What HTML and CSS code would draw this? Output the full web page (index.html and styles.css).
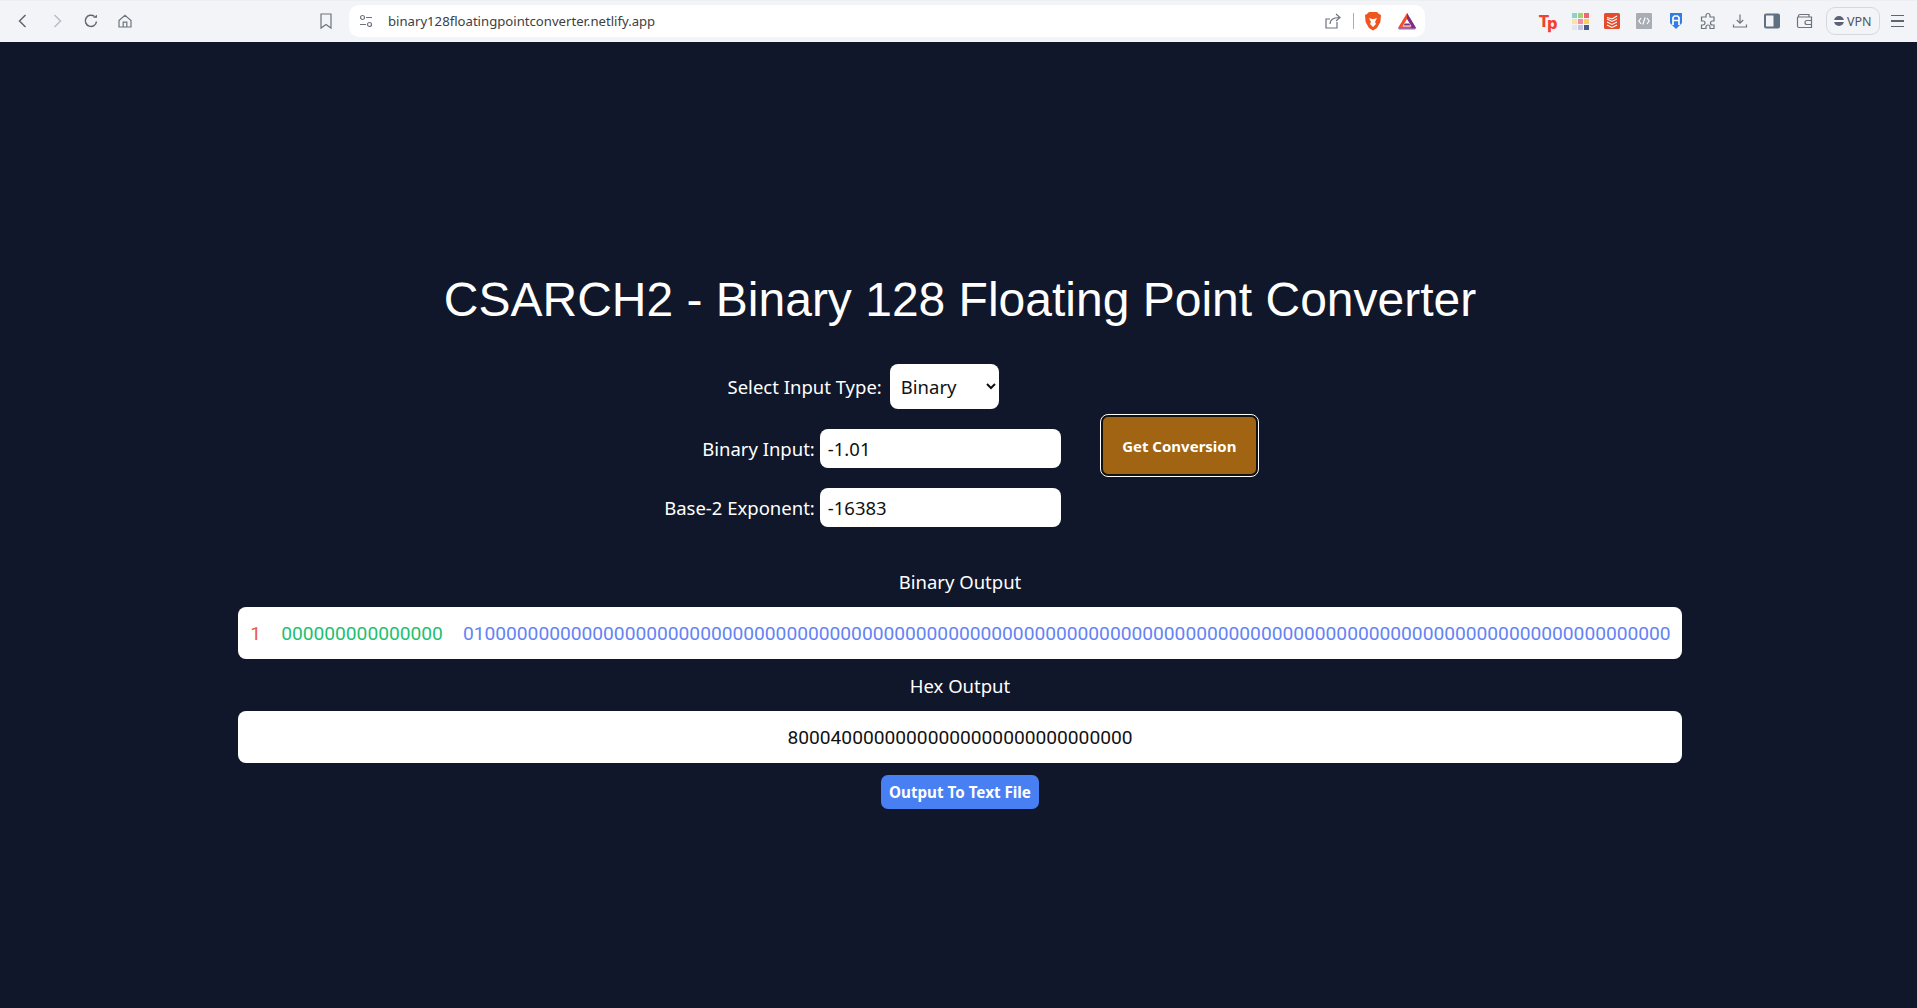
FILE: index.html
```html
<!DOCTYPE html>
<html lang="en">
<head>
    <meta charset="UTF-8">
    <meta name="viewport" content="width=device-width, initial-scale=1.0">
    <title>CSARCH2 - Binary 128 Floating Point Converter</title>
    <link rel="stylesheet" href="styles.css">
</head>
<body>
    <header class="toolbar">
        <div class="nav-buttons">
            <span class="tool"><svg width="16" height="16" viewBox="0 0 16 16"><path d="M10.5 2 4.5 8l6 6" class="ln"/></svg></span>
            <span class="tool"><svg width="16" height="16" viewBox="0 0 16 16"><path d="M5.5 2l6 6-6 6" class="ln faint"/></svg></span>
            <span class="tool"><svg width="16" height="16" viewBox="0 0 16 16"><path d="M13.5 8.5A5.6 5.6 0 1 1 11.5 3.500" class="ln"/><path d="M10 4.800h4V1.800z" class="fill"/></svg></span>
            <span class="tool"><svg width="16" height="16" viewBox="0 0 16 16"><path d="M2 7.500 8 2.200l6 5.300V14H2zM6.200 14V9.200h3.600V14" class="ln thin"/></svg></span>
        </div>
        <span class="tool bookmark"><svg width="16" height="18" viewBox="0 0 16 18"><path d="M3 2h10v14l-5-3.500L3 16z" class="ln thin"/></svg></span>
        <div class="urlbar">
            <svg class="site-icon" width="14" height="14" viewBox="0 0 14 14"><circle cx="3.500" cy="3.500" r="2" class="ln thin"/><path d="M7 3.500h6M1 10.500h6" class="ln thin"/><circle cx="10.500" cy="10.500" r="2" class="ln thin"/></svg>
            <span class="url">binary128floatingpointconverter.netlify.app</span>
            <svg class="share" width="18" height="18" viewBox="0 0 18 18"><path d="M13 10v6H2V7h4" class="ln thin"/><path d="M6 12c0-4 3-6.500 9-6.500M12 2l4 3.500-4 3.500" class="ln thin"/></svg>
            <span class="sep"></span>
            <svg class="brave" width="18" height="20" viewBox="0 0 18 20"><path d="M5 1h8l2 2 2 1-.6 7L13 17l-4 2.500L5 17 1.600 11 1 4l2-1z" fill="#f1551e"/><path d="M5 7l3 1h2l3-1-2 4 1 2-3 3-3-3 1-2z" fill="#fff"/></svg>
            <svg class="bat" width="20" height="18" viewBox="0 0 20 18"><path d="M10 1 1 16h18z" fill="#f2502a"/><path d="M1 16h18l-1 1.500H2z" fill="#a06aa8"/><path d="M10 1l9 15H14L10 8z" fill="#7d2f85"/><path d="M5.500 14.500h9L10 7z" fill="#fff"/><path d="M6.500 13.500h7l-1.300-2H7.800z" fill="#7d2f85"/></svg>
        </div>
        <div class="extensions">
            <span class="ext tp">T<span class="tp-p">p</span></span>
            <span class="ext swatches">
                <i class="sw1"></i><i class="sw2"></i><i class="sw3"></i>
                <i class="sw4"></i><i class="sw5"></i><i class="sw6"></i>
                <i class="sw7"></i><i class="sw8"></i><i class="sw9"></i>
            </span>
            <span class="ext"><svg width="16" height="16" viewBox="0 0 16 16"><rect width="16" height="16" rx="1.500" fill="#e44c2c"/><path d="M3 6 8 8.500 13 6M3 9 8 11.500 13 9M3 12 8 14.500 13 12" stroke="#fff" stroke-width="1.100" fill="none"/><path d="M3 4.500 8 6 13 3" stroke="#fff" stroke-width="1.100" fill="none"/></svg></span>
            <span class="ext"><svg width="16" height="16" viewBox="0 0 16 16"><rect width="16" height="16" rx="1" fill="#a9adb4"/><path d="M5 5 2.800 8 5 11M11 5l2.200 3L11 11M9.200 4.500 6.800 11.500" stroke="#fff" stroke-width="1.200" fill="none"/></svg></span>
            <span class="ext"><svg width="16" height="18" viewBox="0 0 16 18"><path d="M2 1h12v10l-6 6-6-6z" fill="#2f7ee8"/><path d="M5 13V5.500L6.500 4h3L11 5.500V13M5 8.500h6" stroke="#fff" stroke-width="1.700" fill="none"/></svg></span>
            <span class="ext"><svg width="18" height="18" viewBox="0 0 18 18"><path d="M7 3.500a2 2 0 0 1 4 0V5h4v4h-1.500a2 2 0 0 0 0 4H15v3.500h-4V15a2 2 0 0 0-4 0v1.500H2.500V13H4a2 2 0 0 0 0-4H2.500V5H7z" class="ln thin"/></svg></span>
            <span class="ext"><svg width="16" height="16" viewBox="0 0 16 16"><path d="M8 1.500v8.500M4.800 7 8 10.200 11.200 7M1.500 11.500v2.500h13v-2.500" class="ln thin"/></svg></span>
            <span class="ext"><svg width="16" height="16" viewBox="0 0 16 16"><rect x="1" y="1.500" width="14" height="13" rx="1" class="ln panel"/><rect x="9.500" y="1.500" width="5.500" height="13" class="panel-fill"/></svg></span>
            <span class="ext"><svg width="17" height="16" viewBox="0 0 17 16"><path d="M2.500 4V3a1.500 1.500 0 0 1 1.500-1.500h9V4M15.500 4H2a1 1 0 0 0-.5.500V13a1.500 1.500 0 0 0 1.500 1.500h12.500zM15.500 7.500H11a2 2 0 0 0 0 4h4.500" class="ln thin"/></svg></span>
            <span class="vpn"><i class="vpn-dot"></i>VPN</span>
            <span class="menu"><i></i><i></i><i></i></span>
        </div>
    </header>

    <main class="page">
        <h1>CSARCH2 - Binary 128 Floating Point Converter</h1>

        <section class="converter">
            <form class="fields">
                <div class="field field-select">
                    <label for="inputType">Select Input Type:</label>
                    <select id="inputType">
                        <option>Binary</option>
                        <option>Decimal</option>
                    </select>
                </div>
                <div class="field">
                    <label for="binaryInput">Binary Input:</label>
                    <input type="text" id="binaryInput" value="-1.01">
                </div>
                <div class="field">
                    <label for="exponent">Base-2 Exponent:</label>
                    <input type="text" id="exponent" value="-16383">
                </div>
            </form>
            <button type="button" class="convert">Get Conversion</button>
        </section>

        <section class="outputs">
            <h2>Binary Output</h2>
            <div class="output-box binary-box">
                <span class="sign">1</span>
                <span class="exp">000000000000000</span>
                <span class="mantissa">0100000000000000000000000000000000000000000000000000000000000000000000000000000000000000000000000000000000000000</span>
            </div>
            <h2 class="hex-title">Hex Output</h2>
            <div class="output-box hex-box">80004000000000000000000000000000</div>
            <button type="button" class="save">Output To Text File</button>
        </section>
    </main>
</body>
</html>
```

FILE: styles.css
```css
* {
    box-sizing: border-box;
}

html, body {
    height: 100%;
}

body {
    margin: 0;
    background-color: #10172a;
    font-family: "Noto Sans", Arial, sans-serif;
    color: white;
    overflow: hidden;
}

/* browser chrome */
.toolbar {
    display: flex;
    align-items: center;
    height: 42px;
    padding: 0 0 1px 6px;
    background-color: #f2f4f7;
    border-top: 1px solid #eceef1;
}

.ln {
    fill: none;
    stroke: #5f6670;
    stroke-width: 1.5;
}

.thin {
    stroke: #6d747d;
    stroke-width: 1.2;
}

.faint {
    stroke: #b9bec5;
}

.fill {
    fill: #5f6670;
}

.panel {
    stroke: #5f7080;
    stroke-width: 2;
}

.panel-fill {
    fill: #5f7080;
}

.nav-buttons {
    display: flex;
}

.tool {
    display: flex;
    align-items: center;
    justify-content: center;
    width: 34px;
}

.bookmark {
    margin-left: 167px;
}

.urlbar {
    display: flex;
    align-items: center;
    width: 1076px;
    height: 32px;
    margin-left: 6px;
    padding-left: 10px;
    background-color: white;
    border-radius: 10px;
}

.site-icon {
    flex: none;
}

.url {
    margin: 0 0 1px 15px;
    font-size: 13.150px;
    color: #3c4043;
}

.share {
    margin-left: auto;
}

.sep {
    width: 1px;
    height: 16px;
    margin: 0 10px 0 11px;
    background-color: #a9adb4;
}

.brave {
    margin-right: 15px;
}

.bat {
    margin-right: 8px;
}

.extensions {
    display: flex;
    align-items: center;
    margin-left: 107px;
}

.ext {
    display: flex;
    align-items: center;
    justify-content: center;
    width: 32px;
}

.tp {
    height: 24px;
    font-family: Inter, Arial, sans-serif;
    font-weight: 800;
    font-size: 16px;
    color: #f4402f;
}

.tp-p {
    margin-left: -2px;
    margin-top: 3px;
}

.swatches {
    display: grid;
    grid-template-columns: repeat(3, 5px);
    grid-auto-rows: 5px;
    gap: 1px;
    justify-content: center;
    align-items: stretch;
}

.sw1 { background-color: #8fd0c8; }
.sw2 { background-color: #a8d06c; }
.sw3 { background-color: #f2656e; }
.sw4 { background-color: #fbe3a6; }
.sw5 { background-color: #f58aa5; }
.sw6 { background-color: #fbd05e; }
.sw7 { background-color: #e3e6f0; }
.sw8 { background-color: #c2c4e0; }
.sw9 { background-color: #475a80; }

.vpn {
    display: flex;
    align-items: center;
    gap: 3px;
    width: 54px;
    height: 28px;
    margin-left: 6px;
    padding-left: 7px;
    border: 1px solid #d5d9df;
    border-radius: 9px;
    font-size: 12.500px;
    color: #4e555e;
}

.vpn-dot {
    width: 10px;
    height: 10px;
    border-radius: 50%;
    background: linear-gradient(#5a6178 40%, #fff 40%, #fff 60%, #5a6178 60%);
}

.menu {
    display: flex;
    flex-direction: column;
    gap: 4px;
    width: 13px;
    margin-left: 11px;
}

.menu i {
    display: block;
    height: 1.500px;
    background-color: #5f6670;
}

/* page */
.page {
    display: flex;
    flex-direction: column;
    align-items: center;
    padding: 232px 0 0 3px;
}

h1 {
    margin: 0 0 38px;
    font-family: "Liberation Sans", Arial, sans-serif;
    font-size: 48px;
    font-weight: normal;
    line-height: 52px;
}

.converter {
    display: flex;
    align-items: center;
    gap: 39px;
    padding-left: 3px;
}

.fields {
    display: flex;
    flex-direction: column;
    align-items: flex-end;
    gap: 20px;
}

.field {
    display: flex;
    align-items: center;
    gap: 5px;
}

.field-select {
    gap: 8px;
    margin-right: 62px;
}

label {
    font-size: 18.500px;
}

select {
    width: 109px;
    height: 45px;
    padding-left: 7px;
    border: none;
    border-radius: 8px;
    background-color: white;
    font-family: inherit;
    font-size: 18.500px;
    color: #111;
}

input {
    width: 241px;
    height: 39px;
    padding: 0 8px;
    border: none;
    border-radius: 8px;
    background-color: white;
    font-family: inherit;
    font-size: 18.500px;
    color: #111;
}

.convert {
    width: 159px;
    height: 63px;
    border: 3px solid #111;
    outline: 1px solid white;
    outline-offset: -1px;
    border-radius: 8px;
    background-color: #a06412;
    font-family: inherit;
    font-size: 15px;
    font-weight: bold;
    color: white;
}

.outputs {
    display: flex;
    flex-direction: column;
    align-items: center;
    width: 1444px;
    margin-top: 40px;
}

h2 {
    margin: 0 0 10px;
    font-size: 18.500px;
    font-weight: normal;
    line-height: 30px;
}

.hex-title {
    margin: 12px 0 10px;
}

.output-box {
    display: flex;
    align-items: center;
    justify-content: center;
    width: 100%;
    height: 52px;
    border-radius: 8px;
    background-color: white;
    font-family: Roboto, sans-serif;
    font-size: 19.200px;
}

.binary-box {
    gap: 20px;
    padding-left: 1px;
}

.sign {
    color: #e85a4a;
}

.exp {
    color: #1cc070;
}

.mantissa {
    color: #6382f5;
}

.hex-box {
    color: #111;
}

.save {
    width: 158px;
    height: 34px;
    margin-top: 12px;
    border: none;
    border-radius: 7px;
    background-color: #4880f3;
    font-family: "Noto Sans", sans-serif;
    font-size: 15.200px;
    font-weight: bold;
    color: white;
}
```
